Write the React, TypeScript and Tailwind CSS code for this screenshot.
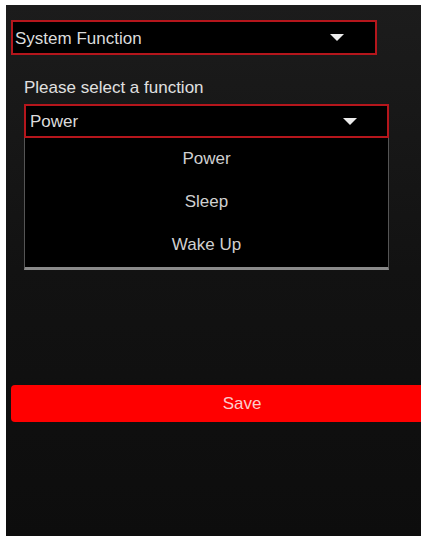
import React from "react";

function Arrow() {
  return (
    <svg width="14" height="7" viewBox="0 0 14 7" className="shrink-0">
      <path d="M0 0 L14 0 L7 7 Z" fill="#ececec" />
    </svg>
  );
}

export default function App() {
  const items = ["Power", "Sleep", "Wake Up"];
  return (
    <div
      className="bg-white w-[426px] h-[543px] pt-[5px] pl-[6px] pr-[5px] pb-[7px]"
      style={{ fontFamily: '"Liberation Sans", Arial, sans-serif' }}
    >
      <div className="w-[415px] h-[531px] overflow-hidden bg-gradient-to-b from-[#1c1c1c] via-[#121212] to-[#0d0d0d] flex flex-col">
        <div className="mt-[15px] ml-[5px] w-[366px] h-[35px] bg-black border-2 border-[#b5161c] flex items-center justify-between pl-[2px] pr-[31px]">
          <span className="text-[17px] text-[#dcdcdc] leading-none mt-[2px]">System Function</span>
          <Arrow />
        </div>

        <div className="ml-[18px] mt-[24px] text-[17px] leading-none text-[#e0e0e0]">
          Please select a function
        </div>

        <div className="ml-[18px] mt-[8px] w-[365px] flex flex-col">
          <div className="h-[34px] bg-black border-2 border-[#b5161c] flex items-center justify-between pl-[4px] pr-[30px]">
            <span className="text-[17px] text-[#dcdcdc] leading-none">Power</span>
            <Arrow />
          </div>
          <div className="bg-black border-x border-[#555] border-b-[3px] border-b-[#8a8a8a] flex flex-col">
            {items.map((it) => (
              <div
                key={it}
                className="h-[43px] flex items-center justify-center text-[17px] text-[#d0d0d0] leading-none pb-[2px]"
              >
                {it}
              </div>
            ))}
          </div>
        </div>

        <div className="ml-[5px] mt-[115px] w-[462px] h-[37px] shrink-0 bg-[#ff0000] rounded-[4px] flex items-center justify-center">
          <span className="text-[17px] text-[#fccccc] leading-none">Save</span>
        </div>
      </div>
    </div>
  );
}
